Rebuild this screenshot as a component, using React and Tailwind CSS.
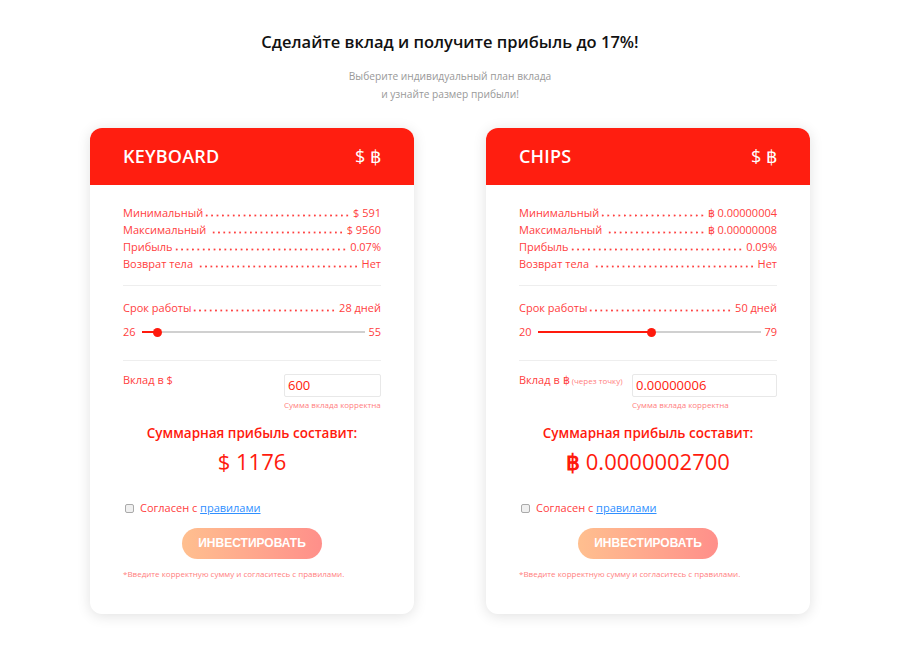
import React from 'react';

const Row = ({ label, value, gap }) => (
    <div className="flex items-end h-[17px] leading-[17px]">
        <span className="whitespace-nowrap">{label}</span>
        {gap ? <span className="w-[4px]" /> : null}
        <span className="flex-1 min-w-0 h-[3px] mb-[4px] mx-[1px] bg-[radial-gradient(circle,#ff4040_0.85px,transparent_1.25px)] bg-[length:5.3px_3px] bg-repeat-space" />
        <span className="whitespace-nowrap pl-[2px]">{value}</span>
    </div>
);

const Slider = ({ min, max, value }) => {
    const pct = ((value - min) / (max - min)) * 100;
    return (
        <div className="flex items-center h-[14px] mt-[9px]">
            <span className="w-[19px]">{min}</span>
            <div className="flex-1 relative h-[14px] flex items-center">
                <div className="w-full h-[2px] bg-[#d0d0d0]" />
                <div className="absolute left-0 h-[2px] bg-[#ff1a0d]" style={{ width: pct + '%' }} />
                <div className="absolute w-[9px] h-[9px] rounded-full bg-[#ff1a0d] -ml-[4.5px]" style={{ left: pct + '%' }} />
            </div>
            <span className="w-[16px] text-right">{max}</span>
        </div>
    );
};

const Card = props => {
    const {
        title,
        rows,
        term,
        slider,
        depositLabel,
        hint,
        inputValue,
        inputWidth,
        total,
        totalBtc,
    } = props;

    return (
        <div className="w-[324px] bg-white rounded-[12px] shadow-[0_2px_14px_rgba(0,0,0,0.12)] overflow-hidden">
            <div className="h-[57px] bg-[#ff1e10] flex items-center justify-between px-[33px] text-white">
                <span className="text-[18px] font-semibold tracking-[0.2px]">{title}</span>
                <span className="text-[18px] font-normal">$ ฿</span>
            </div>
            <section className="px-[33px] pt-[19px] pb-[34px] text-[11px] text-[#ff4040]">
                {rows.map(r => (
                    <Row key={r.label} label={r.label} value={r.value} gap={r.gap} />
                ))}
                <div className="border-t border-[#eeeeee] mt-[13px]" />
                <div className="pt-[13px]">
                    <Row label="Срок работы" value={term} />
                    <Slider {...slider} />
                </div>
                <div className="border-t border-[#eeeeee] mt-[21px]" />
                <div className="flex justify-between pt-[13px]">
                    <span className="text-[11px] leading-[17px] -mt-[3px]">
                        {depositLabel}
                        {hint ? <span className="text-[8px] text-[#ff8080]"> {hint}</span> : null}
                    </span>
                    <div className="flex flex-col items-start">
                        <div className={'h-[23px] border border-[#e8e8e8] rounded-[2px] px-[3px] flex items-center text-[13px] text-[#ff1a0d] ' + inputWidth}>
                            {inputValue}
                        </div>
                        <span className="text-[8px] text-[#ff8080] leading-[14px] mt-[1px]">Сумма вклада корректна</span>
                    </div>
                </div>
                <p className="text-center text-[13.5px] font-semibold text-[#ff1a0d] mt-[11px] leading-[20px]">Суммарная прибыль составит:</p>
                <p className="text-center text-[22px] font-medium text-[#ff1a0d] mt-[3px] leading-[30px]">
                    {totalBtc ? <span className="font-bold">฿</span> : '$'} {total}
                </p>
                <div className="flex items-center mt-[24px] ml-[2px]">
                    <span className="w-[9px] h-[9px] border border-[#aaaaaa] rounded-[2px] bg-[#f0f0f0]" />
                    <span className="ml-[6px] text-[11px] text-[#ff4040]">
                        Согласен с <span className="text-[#2f8fff] underline">правилами</span>
                    </span>
                </div>
                <div className="flex justify-center mt-[11px]">
                    <button className="w-[140px] h-[31px] rounded-full bg-gradient-to-r from-[#ffbf8f] to-[#ff8f8a] text-white text-[12px] font-bold [font-family:'Liberation_Sans',Arial,sans-serif]">
                        ИНВЕСТИРОВАТЬ
                    </button>
                </div>
                <p className="text-left text-[8px] text-[#ff8080] mt-[9px]">*Введите корректную сумму и согласитесь с правилами.</p>
            </section>
        </div>
    );
};

const App = () => {
    return (
        <div className="min-h-[667px] bg-white [font-family:'Open_Sans',sans-serif] pt-[29px]">
            <h1 className="text-center text-[16.5px] font-semibold text-[#111111] leading-[26px]">Сделайте вклад и получите прибыль до 17%!</h1>
            <p className="text-center text-[10.2px] text-[#999999] leading-[18px] mt-[12px]">
                Выберите индивидуальный план вклада<br />и узнайте размер прибыли!
            </p>
            <div className="flex justify-center gap-[72px] mt-[25px]">
                <Card
                    title="KEYBOARD"
                    rows={[
                        { label: 'Минимальный', value: '$ 591' },
                        { label: 'Максимальный', value: '$ 9560', gap: true },
                        { label: 'Прибыль', value: '0.07%' },
                        { label: 'Возврат тела', value: 'Нет', gap: true },
                    ]}
                    term="28 дней"
                    slider={{ min: 26, max: 55, value: 28 }}
                    depositLabel="Вклад в $"
                    inputValue="600"
                    inputWidth="w-[97px]"
                    total="1176"
                />
                <Card
                    title="CHIPS"
                    rows={[
                        { label: 'Минимальный', value: '฿ 0.00000004' },
                        { label: 'Максимальный', value: '฿ 0.00000008', gap: true },
                        { label: 'Прибыль', value: '0.09%' },
                        { label: 'Возврат тела', value: 'Нет', gap: true },
                    ]}
                    term="50 дней"
                    slider={{ min: 20, max: 79, value: 50 }}
                    depositLabel="Вклад в ฿"
                    hint="(через точку)"
                    inputValue="0.00000006"
                    inputWidth="w-[145px]"
                    total="0.0000002700"
                    totalBtc
                />
            </div>
        </div>
    );
};

export default App;
